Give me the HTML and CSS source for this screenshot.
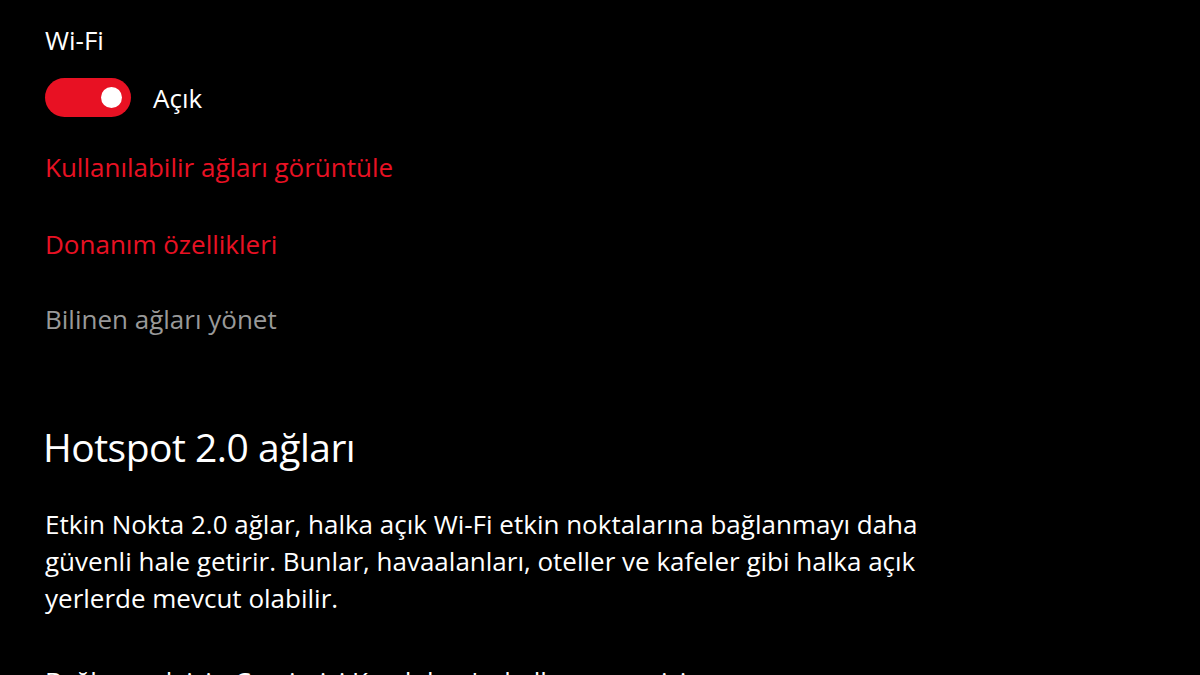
FILE: index.html
```html
<!DOCTYPE html>
<html lang="tr">
<head>
<meta charset="utf-8">
<title>Wi-Fi</title>
<link rel="stylesheet" href="styles.css">
</head>
<body>
<main class="page">
  <div class="label">Wi-Fi</div>
  <div class="toggle-row">
    <span class="toggle"><span class="knob"></span></span>
    <span class="toggle-text">Açık</span>
  </div>
  <a class="link link-first" href="#">Kullanılabilir ağları görüntüle</a>
  <a class="link link-gap" href="#">Donanım özellikleri</a>
  <a class="link link-muted link-gap2" href="#">Bilinen ağları yönet</a>
  <h2 class="section-title">Hotspot 2.0 ağları</h2>
  <p class="desc">Etkin Nokta 2.0 ağlar, halka açık Wi-Fi etkin noktalarına bağlanmayı daha güvenli hale getirir. Bunlar, havaalanları, oteller ve kafeler gibi halka açık yerlerde mevcut olabilir.</p>
  <div class="label next">Bağlanmak için Çevrimiçi Kaydolma'yı kullanmama izin ver</div>
</main>
</body>
</html>
```

FILE: styles.css
```css
html, body {
  margin: 0;
  padding: 0;
  background: #000;
}
body {
  width: 1200px;
  height: 675px;
  overflow: hidden;
  font-family: "Open Sans", "Noto Sans", sans-serif;
  color: #fff;
}
.page {
  padding: 22px 0 0 45px;
  display: flex;
  flex-direction: column;
  align-items: flex-start;
}
.label {
  font-size: 26px;
  line-height: 36px;
  color: #fff;
}
.toggle-row {
  margin-top: 20px;
  display: flex;
  align-items: center;
  gap: 22px;
  height: 39px;
}
.toggle {
  width: 86px;
  height: 39px;
  border-radius: 20px;
  background: #e81123;
  display: flex;
  align-items: center;
  justify-content: flex-end;
  padding-right: 9px;
  box-sizing: border-box;
}
.knob {
  width: 21px;
  height: 21px;
  border-radius: 50%;
  background: #fff;
}
.toggle-text {
  font-size: 26px;
  line-height: 36px;
  color: #fff;
}
.link {
  font-size: 26px;
  line-height: 36px;
  color: #e81123;
  text-decoration: none;
}
.link-first { margin-top: 32px; }
.link-gap { margin-top: 41px; }
.link-gap2 { margin-top: 39px; }
.link-muted { color: #999; }
.section-title {
  margin: 82px 0 0 -2px;
  font-size: 39px;
  line-height: 56px;
  font-weight: 400;
  letter-spacing: -0.5px;
}
.desc {
  margin: 31px 0 0 0;
  width: 890px;
  font-size: 26px;
  line-height: 37px;
}
.next {
  margin-top: 46px;
}
```
